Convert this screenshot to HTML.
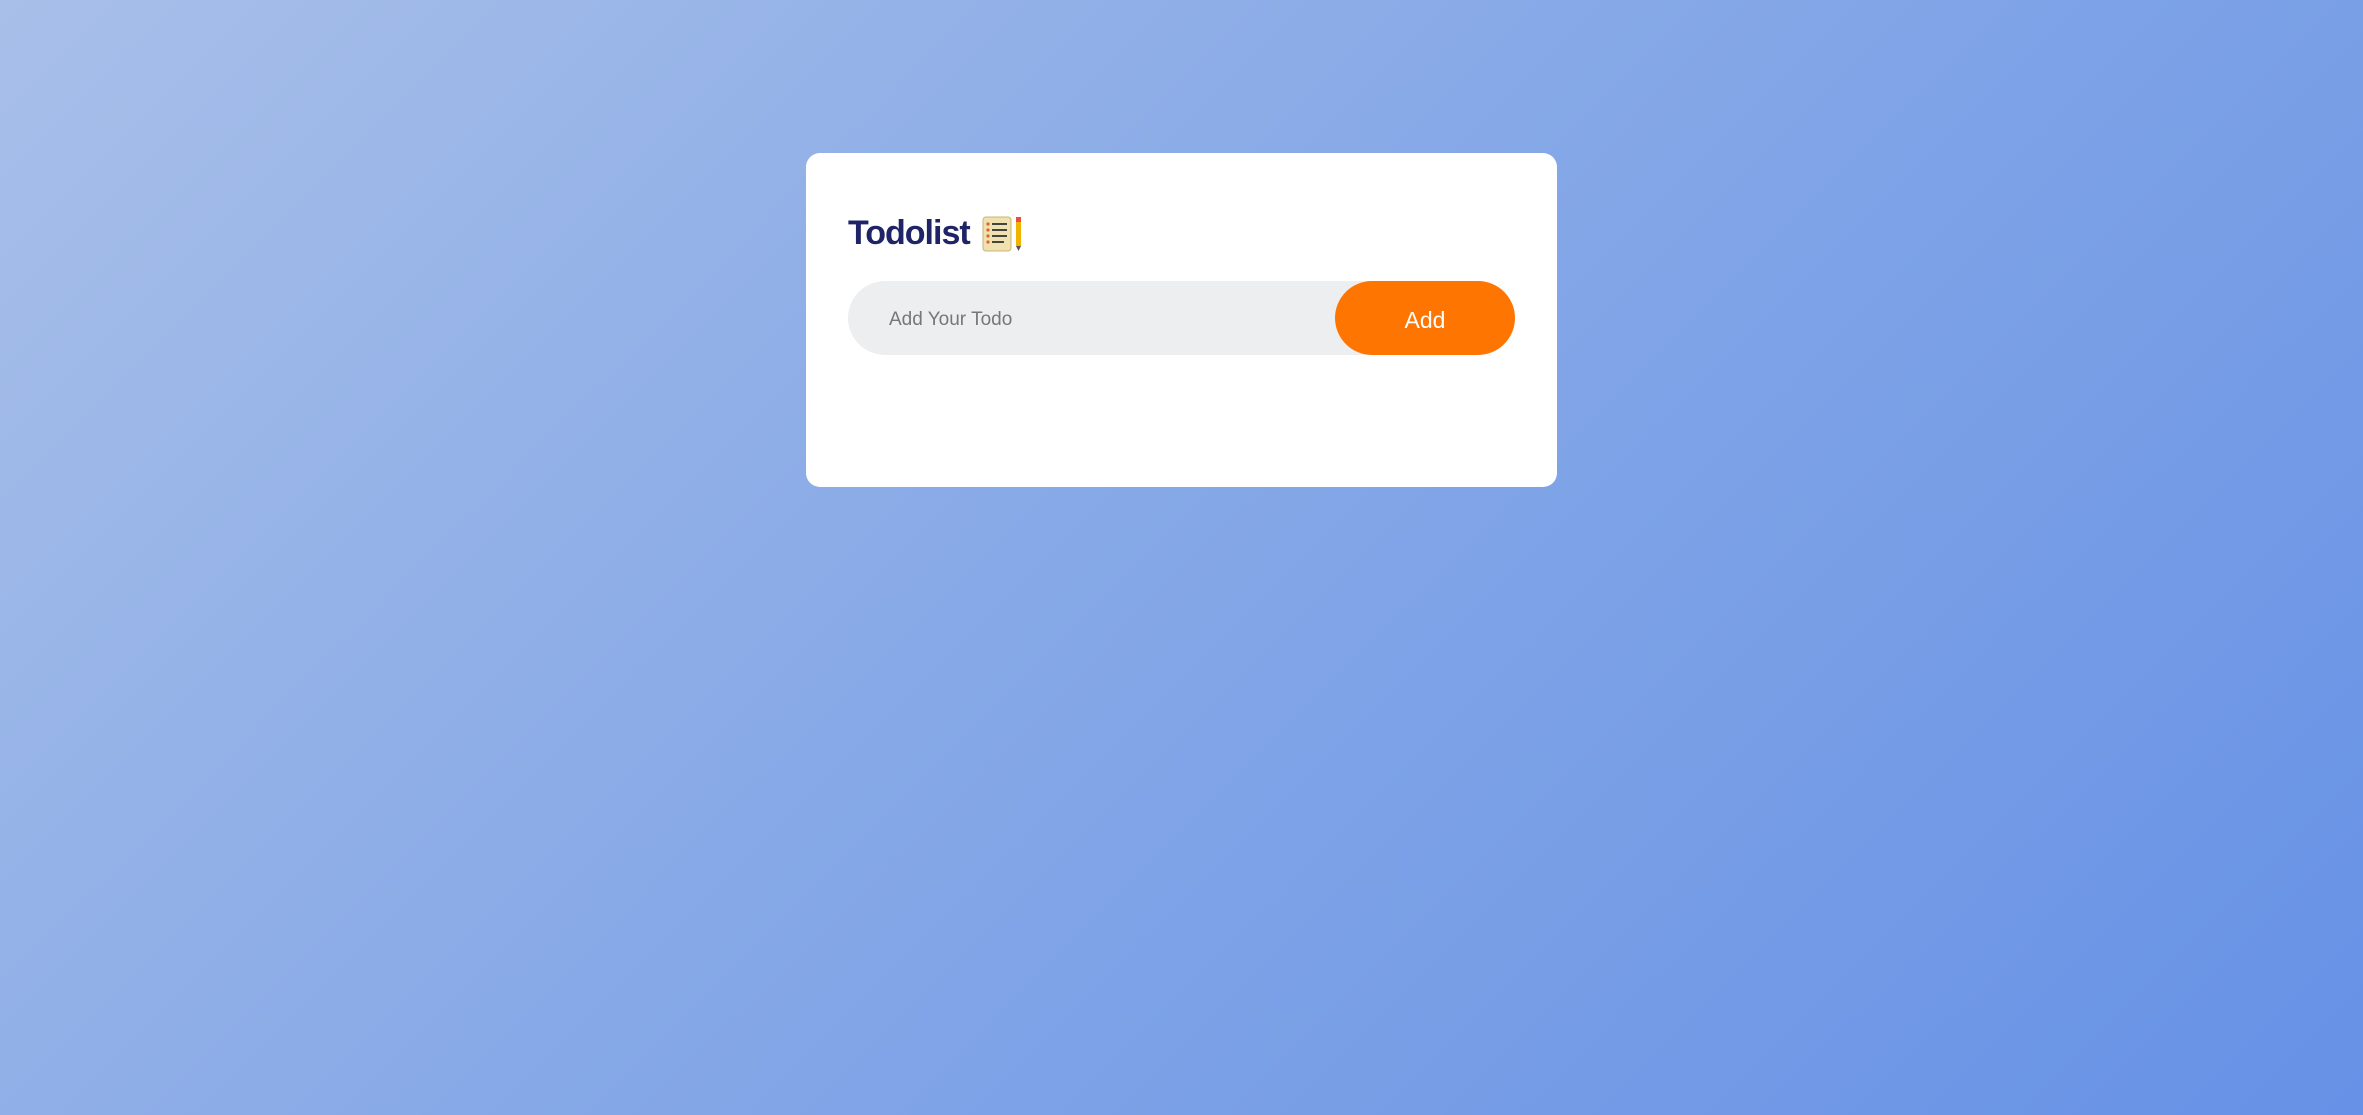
<!DOCTYPE html>
<html><head><meta charset="utf-8"><style>
html,body{margin:0;padding:0;width:2363px;height:1115px;overflow:hidden}
body{background:linear-gradient(135deg,#a8bfe9 0%,#87a9e7 45%,#6691e6 100%);font-family:"Liberation Sans",sans-serif;position:relative}
.card{position:absolute;left:806px;top:153px;width:751px;height:334px;background:#fff;border-radius:14px}
h1{position:absolute;left:42px;top:61px;margin:0;font-size:34px;font-weight:bold;color:#1f2466;letter-spacing:-1px;display:flex;align-items:center}
h1 svg{margin-left:12px}
.row{position:absolute;left:42px;top:128px;width:667px;height:74px;background:#eceef0;border-radius:37px}
.ph{position:absolute;left:41px;top:2px;line-height:74px;font-size:19px;color:#777}
.btn{position:absolute;right:0;top:0;width:180px;height:74px;background:#ff7502;border-radius:37px;color:#fff;font-size:23px;line-height:78px;text-align:center}
</style></head><body>
<div class="card">
<h1>Todolist <svg width="44" height="36" viewBox="0 0 44 36"><rect x="1" y="1" width="28" height="34" rx="3" fill="#efe1b0" stroke="#c9b47a"/><g fill="#e0642a"><circle cx="6" cy="8" r="1.6"/><circle cx="6" cy="14" r="1.6"/><circle cx="6" cy="20" r="1.6"/><circle cx="6" cy="26" r="1.6"/></g><g stroke="#333" stroke-width="1.8"><line x1="10" y1="8" x2="25" y2="8"/><line x1="10" y1="14" x2="25" y2="14"/><line x1="10" y1="20" x2="25" y2="20"/><line x1="10" y1="26" x2="22" y2="26"/></g><rect x="34" y="1" width="5" height="5" fill="#ea4b4b"/><rect x="34" y="6" width="5" height="24" fill="#f2b200"/><polygon points="34,30 39,30 36.5,35" fill="#555"/></svg></h1>
<div class="row"><div class="ph">Add Your Todo</div><div class="btn">Add</div></div>
</div>
</body></html>
